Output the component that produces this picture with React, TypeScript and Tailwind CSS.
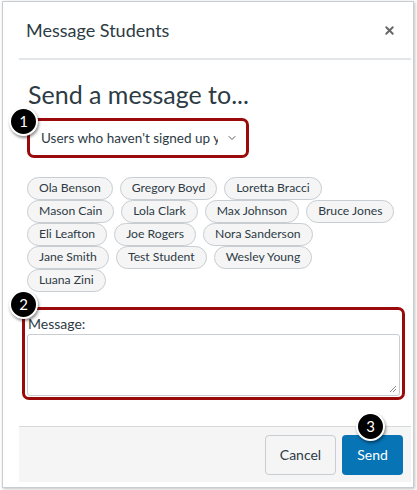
import { ChevronDown, X } from "lucide-react";

const students: string[] = [
  "Ola Benson",
  "Gregory Boyd",
  "Loretta Bracci",
  "Mason Cain",
  "Lola Clark",
  "Max Johnson",
  "Bruce Jones",
  "Eli Leafton",
  "Joe Rogers",
  "Nora Sanderson",
  "Jane Smith",
  "Test Student",
  "Wesley Young",
  "Luana Zini",
];

function Step({ n, className }: { n: number; className: string }) {
  return (
    <div
      className={`absolute w-[29px] h-[29px] rounded-full bg-black border-2 border-white text-white text-[15px] flex items-center justify-center shadow-[1px_2px_3px_rgba(0,0,0,0.45)] ${className}`}
    >
      {n}
    </div>
  );
}

export default function App() {
  return (
    <div className="w-[417px] h-[490px] bg-white pl-[2px] pt-[1px] font-['Lato','Open_Sans',sans-serif] text-[#2d3b45]">
      <div className="w-[412px] h-[487px] border border-[#c7cdd1] bg-white pl-[16px] pr-[2px] shadow-[1px_1px_3px_rgba(0,0,0,0.25)] flex flex-col">
        {/* header */}
        <div className="h-[58px] border-b-2 border-[#e3e6e9] flex items-center justify-between pl-[7px] pr-[15px] shrink-0">
          <h1 className="text-[18px] leading-none">Message Students</h1>
          <X className="w-[13px] h-[13px] text-[#666]" strokeWidth={3.5} />
        </div>

        {/* body */}
        <div className="pl-[8px] pr-[10px] pt-[19px] flex-1">
          <h2 className="text-[25px] leading-[30px] pl-[1px]">Send a message to...</h2>

          <div className="relative mt-[12px] ml-[3px] w-[216px] h-[34px]">
            <div className="h-full bg-white flex items-center pl-[11px] pr-[8px] text-[13.5px]">
              <span className="flex-1 overflow-hidden whitespace-nowrap">Users who haven't signed up y</span>
              <ChevronDown className="w-[12px] h-[12px] text-[#444] ml-[8px]" strokeWidth={1.75} />
            </div>
            <div className="absolute -inset-[3px] border-[3px] border-[#9a0a0a] rounded-[7px] pointer-events-none" />
            <Step n={1} className="-left-[21px] -top-[14px]" />
          </div>

          <div className="mt-[22px] flex flex-wrap gap-x-[7px] w-[368px]">
            {students.map((s) => (
              <span
                key={s}
                className="h-[23px] px-[11px] rounded-full border border-[#c7cdd1] bg-[#f5f5f5] text-[12.2px] flex items-center whitespace-nowrap"
              >
                {s}
              </span>
            ))}
          </div>

          <div className="relative mt-[22px] w-[373px]">
            <label className="block text-[14px] leading-[20px] pl-[1px]">Message:</label>
            <div className="relative h-[62px] border border-[#c7cdd1] rounded-[3px] bg-white">
              <svg className="absolute right-[2px] bottom-[2px]" width="8" height="8" viewBox="0 0 8 8">
                <path d="M7 1 L1 7 M7 4 L4 7" stroke="#888" strokeWidth="1" />
              </svg>
            </div>
            <div className="absolute -left-[5px] -right-[5px] -top-[7px] -bottom-[4px] border-[3px] border-[#9a0a0a] rounded-[7px] pointer-events-none" />
            <Step n={2} className="-left-[18px] -top-[24px]" />
          </div>
        </div>

        {/* footer */}
        <div className="h-[56px] mb-[5px] bg-[#f5f5f5] border-t border-[#d7dbde] flex items-center justify-end gap-[6px] pr-[8px] shrink-0">
          <button className="h-[40px] w-[71px] rounded-[4px] border border-[#c7cdd1] bg-[#f5f5f5] text-[14px] text-[#2d3b45]">
            Cancel
          </button>
          <div className="relative">
            <button className="h-[40px] w-[61px] rounded-[4px] bg-[#0774b6] text-[14px] text-white">
              Send
            </button>
            <Step n={3} className="left-[14px] -top-[23px]" />
          </div>
        </div>
      </div>
    </div>
  );
}
